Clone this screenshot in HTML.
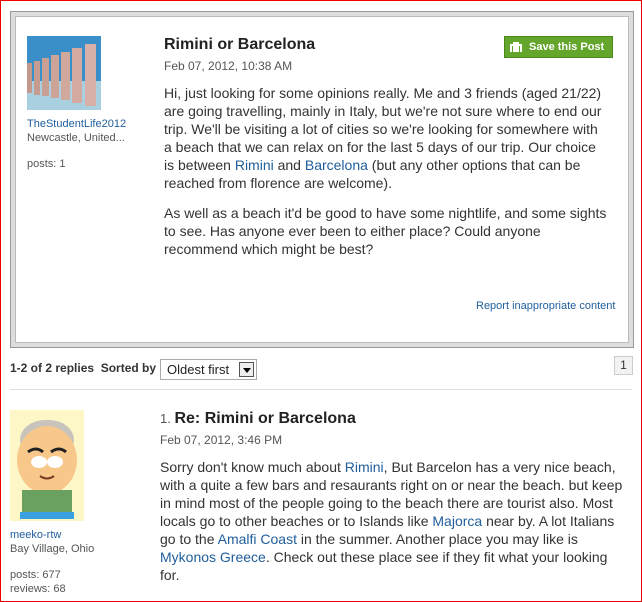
<!DOCTYPE html>
<html><head><meta charset="utf-8"><style>
*{margin:0;padding:0;box-sizing:border-box}
html,body{width:642px;height:602px;overflow:hidden;background:#fff}
body{font-family:"Liberation Sans",Arial,sans-serif;color:#333;position:relative}
.frame{position:absolute;left:0;top:0;width:642px;height:602px;border:1px solid #e00;}
.abs{position:absolute;white-space:nowrap}
a,.l{color:#1f5e9c;text-decoration:none}
.box{position:absolute;left:10px;top:11px;width:624px;height:337px;border:1px solid #999;background:#ddd;padding:4px}
.inner{width:100%;height:100%;background:#fff;border:1px solid #bbb}
.body{font-size:14px;line-height:18px;color:#333}
.small{font-size:11px;color:#555}
.date{font-size:12px;color:#555}
</style></head><body>
<div class="frame"></div>
<div class="box"><div class="inner"></div></div>
<svg class="abs" style="left:27px;top:36px" width="74" height="74">
<rect width="74" height="74" fill="#3a8fc8"/>
<rect y="45" width="74" height="29" fill="#a8d0e0"/>
<rect x="58" y="8" width="11" height="62" fill="#d9b0a8"/>
<rect x="45" y="12" width="10" height="55" fill="#d4aaa0"/>
<rect x="34" y="16" width="9" height="48" fill="#d0a89c"/>
<rect x="24" y="19" width="8" height="43" fill="#cda498"/>
<rect x="15" y="22" width="7" height="38" fill="#c9a094"/>
<rect x="7" y="25" width="6" height="34" fill="#c69c90"/>
<rect x="0" y="27" width="5" height="30" fill="#c4988c"/>
</svg>
<div class="abs l" style="left:27px;top:118px;font-size:11px">TheStudentLife2012</div>
<div class="abs small" style="left:27px;top:132px">Newcastle, United...</div>
<div class="abs small" style="left:27px;top:158px">posts: 1</div>
<div class="abs" style="left:164px;top:36px;font-size:16px;font-weight:bold;color:#222">Rimini or Barcelona</div>
<div class="abs date" style="left:164px;top:59px">Feb 07, 2012, 10:38 AM</div>
<div class="abs" style="left:504px;top:36px;width:109px;height:22px;background:#64a52c;border:1px solid #4a8a1c;color:#fff;font-size:11px;font-weight:bold;line-height:20px;padding-left:24px">Save this Post
<svg style="position:absolute;left:5px;top:5px" width="12" height="10"><rect x="0" y="2" width="12" height="8" fill="#fff"/><rect x="3" y="0" width="6" height="2" fill="#fff"/><rect x="2" y="4" width="1" height="6" fill="#64a52c"/><rect x="9" y="4" width="1" height="6" fill="#64a52c"/></svg></div>
<div class="abs body" style="left:164px;top:84px">Hi, just looking for some opinions really. Me and 3 friends (aged 21/22)<br>are going travelling, mainly in Italy, but we're not sure where to end our<br>trip. We'll be visiting a lot of cities so we're looking for somewhere with<br>a beach that we can relax on for the last 5 days of our trip. Our choice<br>is between <span class="l">Rimini</span> and <span class="l">Barcelona</span> (but any other options that can be<br>reached from florence are welcome).</div>
<div class="abs body" style="left:164px;top:204px">As well as a beach it'd be good to have some nightlife, and some sights<br>to see. Has anyone ever been to either place? Could anyone<br>recommend which might be best?</div>
<div class="abs l" style="left:476px;top:300px;font-size:11px">Report inappropriate content</div>
<div class="abs" style="left:10px;top:361px;font-size:12px;font-weight:bold;color:#333">1-2 of 2 replies &nbsp;Sorted by</div>
<div class="abs" style="left:160px;top:359px;width:97px;height:21px;border:1px solid #aaa;font-size:13px;line-height:19px;padding-left:6px;color:#222">Oldest first
<div style="position:absolute;right:2px;top:2px;width:15px;height:15px;border:1px solid #555;background:#eee"><div style="position:absolute;left:3px;top:5px;border-left:4px solid transparent;border-right:4px solid transparent;border-top:5px solid #000"></div></div></div>
<div class="abs" style="left:614px;top:356px;width:19px;height:19px;border:1px solid #ccc;background:#f2f2f2;font-size:12px;text-align:center;line-height:17px">1</div>
<div class="abs" style="left:10px;top:389px;width:622px;height:1px;background:#e0e0e0"></div>
<svg class="abs" style="left:10px;top:410px" width="74" height="111">
<rect width="74" height="111" fill="#fdf7c8"/>
<rect x="10" y="10" width="54" height="40" rx="25" fill="#c8c4bc"/>
<ellipse cx="37" cy="50" rx="30" ry="34" fill="#f8c88a"/>
<path d="M18 42 q8-6 15 0 M41 42 q8-6 15 0" stroke="#222" stroke-width="3" fill="none"/>
<ellipse cx="29" cy="52" rx="8" ry="6" fill="#fff"/><ellipse cx="45" cy="52" rx="8" ry="6" fill="#fff"/>
<path d="M30 66 q7 5 14 0" stroke="#7a3a20" stroke-width="2" fill="none"/>
<rect x="12" y="80" width="50" height="24" fill="#6aa060"/>
<rect x="10" y="102" width="54" height="7" fill="#3aa0e0"/>
</svg>
<div class="abs l" style="left:10px;top:529px;font-size:11px">meeko-rtw</div>
<div class="abs small" style="left:10px;top:543px">Bay Village, Ohio</div>
<div class="abs small" style="left:10px;top:569px">posts: 677</div>
<div class="abs small" style="left:10px;top:583px">reviews: 68</div>
<div class="abs" style="left:160px;top:410px;font-size:16px;font-weight:bold;color:#222"><span style="font-weight:normal;font-size:13px;color:#555">1. </span>Re: Rimini or Barcelona</div>
<div class="abs date" style="left:160px;top:433px">Feb 07, 2012, 3:46 PM</div>
<div class="abs body" style="left:160px;top:458px">Sorry don't know much about <span class="l">Rimini</span>, But Barcelon has a very nice beach,<br>with a quite a few bars and resaurants right on or near the beach. but keep<br>in mind most of the people going to the beach there are tourist also. Most<br>locals go to other beaches or to Islands like <span class="l">Majorca</span> near by. A lot Italians<br>go to the <span class="l">Amalfi Coast</span> in the summer. Another place you may like is<br><span class="l">Mykonos Greece</span>. Check out these place see if they fit what your looking<br>for.</div>
</body></html>
